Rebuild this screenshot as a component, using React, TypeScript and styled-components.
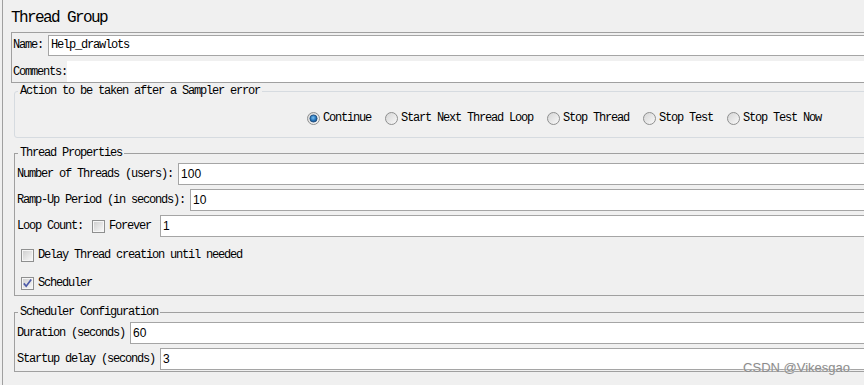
import React, { useId } from 'react';
import styled, { createGlobalStyle } from 'styled-components';

const MONO = `"Liberation Mono", "Courier New", monospace`;
const SANS = `"Liberation Sans", Arial, sans-serif`;

const GlobalStyle = createGlobalStyle`
  html, body {
    margin: 0;
    padding: 0;
    background: #f0f0f0;
  }
  body {
    width: 864px;
    height: 385px;
    overflow: hidden;
  }
`;

const Frame = styled.div`
  position: relative;
  width: 864px;
  height: 385px;
  overflow: hidden;
  box-sizing: border-box;
  padding-left: 2px;
  background: #f0f0f0;
`;

const Panel = styled.div`
  width: 930px;
  height: 100%;
  border-left: 1px solid #a0a0a0;
  display: flex;
  flex-direction: column;
  font-family: ${MONO};
  font-size: 12px;
  letter-spacing: -1.2px;
  color: #000;
`;

const Title = styled.h1`
  margin: 0 0 4px 8px;
  padding-top: 8px;
  font-family: ${MONO};
  font-size: 16px;
  line-height: 20px;
  font-weight: normal;
  letter-spacing: -1.6px;
  color: #000;
`;

const NameBox = styled.div`
  margin-left: 8px;
  border: 1px solid #a0a0a0;
  padding: 1px 0 0 1px;
  display: flex;
  flex-direction: column;
  gap: 5px;
`;

const Row = styled.div<{ $gap?: number; $h?: number }>`
  display: flex;
  align-items: center;
  gap: ${p => p.$gap ?? 5}px;
  height: ${p => p.$h ?? 22}px;
  white-space: nowrap;
`;

const Label = styled.span`
  line-height: 14px;
`;

const TextField = styled.input<{ $mono?: boolean }>`
  flex: 1;
  min-width: 0;
  height: ${p => (p.$mono ? 21 : 22)}px;
  box-sizing: border-box;
  margin: 0;
  padding: 0 2px;
  border: 1px solid #a5a5a5;
  border-radius: 0;
  background: #fff;
  outline: none;
  color: #000;
  font-family: ${p => (p.$mono ? MONO : SANS)};
  font-size: 12px;
  letter-spacing: ${p => (p.$mono ? '-1.2px' : '0')};
`;

const CommentsArea = styled.div`
  flex: 1;
  height: 21px;
  background: #fff;
`;

const Group = styled.fieldset<{ $light?: boolean; $top: number; $bottom?: number }>`
  margin: ${p => p.$top}px 0 0 11px;
  padding: 3px 0 ${p => p.$bottom ?? 0}px 2px;
  min-width: 0;
  border: 1px solid ${p => (p.$light ? '#d6dbe0' : '#a0a0a0')};
  border-radius: ${p => (p.$light ? 3 : 0)}px;
`;

const Legend = styled.legend`
  margin-left: 1px;
  padding: 0 2px;
  font-family: ${MONO};
  font-size: 12px;
  line-height: 14px;
  letter-spacing: -1.2px;
`;

const Stack = styled.div`
  display: flex;
  flex-direction: column;
  gap: 4px;
`;

const CheckList = styled.div`
  display: flex;
  flex-direction: column;
  gap: 4px;
  padding-top: 6px;
`;

const CheckRow = styled.label`
  display: flex;
  align-items: center;
  gap: 4px;
  height: 24px;
  padding-left: 4px;
  white-space: nowrap;
`;

const InlineCheck = styled.label`
  display: flex;
  align-items: center;
  gap: 4px;
  margin: 0 9px;
`;

const RadioRow = styled.div`
  display: flex;
  align-items: center;
  gap: 14px;
  height: 22px;
  margin-top: 6px;
  padding-left: 290px;
  white-space: nowrap;
`;

const RadioItem = styled.label`
  display: flex;
  align-items: center;
  gap: 3px;
`;

const Watermark = styled.div`
  position: absolute;
  right: 14px;
  top: 360px;
  font-family: ${SANS};
  font-size: 13px;
  line-height: 15px;
  color: #8c8c8c;
  text-shadow: 0 0 2px #f0f0f0;
  pointer-events: none;
`;

const Radio: React.FC<{ checked?: boolean }> = ({ checked }) => {
  const id = useId().replace(/:/g, '');
  return (
    <svg width="13" height="13" viewBox="0 0 13 13">
      <defs>
        <linearGradient id={`rf${id}`} x1="0" y1="0" x2="1" y2="1">
          <stop offset="0" stopColor="#d4d4d4" />
          <stop offset="1" stopColor="#fafafa" />
        </linearGradient>
        <radialGradient id={`rd${id}`} cx="0.45" cy="0.4" r="0.6">
          <stop offset="0" stopColor="#7cc0f0" />
          <stop offset="0.6" stopColor="#2a78bd" />
          <stop offset="1" stopColor="#16508a" />
        </radialGradient>
      </defs>
      <circle cx="6.5" cy="6.5" r="6" fill={`url(#rf${id})`} stroke="#8e8f8f" />
      {checked && (
        <circle cx="6.5" cy="6.5" r="3.6" fill={`url(#rd${id})`} stroke="#1a4778" strokeWidth="0.8" />
      )}
    </svg>
  );
};

const Check: React.FC<{ checked?: boolean }> = ({ checked }) => {
  const id = useId().replace(/:/g, '');
  return (
    <svg width="13" height="13" viewBox="0 0 13 13">
      <defs>
        <linearGradient id={`cf${id}`} x1="0" y1="0" x2="1" y2="1">
          <stop offset="0" stopColor="#d0d0d0" />
          <stop offset="1" stopColor="#f7f7f7" />
        </linearGradient>
      </defs>
      <rect x="0.5" y="0.5" width="12" height="12" fill="#f6f6f6" stroke="#8e8f8f" />
      <rect x="2" y="2" width="9" height="9" fill={`url(#cf${id})`} />
      {checked && (
        <path d="M2.8 6.4 L5.2 9.2 L10.2 2.6" fill="none" stroke="#4c5aa8" strokeWidth="1.7" />
      )}
    </svg>
  );
};

const actions = [
  { label: 'Continue', checked: true },
  { label: 'Start Next Thread Loop' },
  { label: 'Stop Thread' },
  { label: 'Stop Test' },
  { label: 'Stop Test Now' },
];

const App: React.FC = () => {
  return (
    <Frame>
      <GlobalStyle />
      <Panel>
        <Title>Thread Group</Title>

        <NameBox>
          <Row>
            <Label>Name:</Label>
            <TextField $mono readOnly value="Help_drawlots" />
          </Row>
          <Row $gap={0} $h={21}>
            <Label>Comments:</Label>
            <CommentsArea />
          </Row>
        </NameBox>

        <Group $light $top={1} $bottom={8}>
          <Legend>Action to be taken after a Sampler error</Legend>
          <RadioRow>
            {actions.map(a => (
              <RadioItem key={a.label}>
                <Radio checked={a.checked} />
                <span>{a.label}</span>
              </RadioItem>
            ))}
          </RadioRow>
        </Group>

        <Group $top={8}>
          <Legend>Thread Properties</Legend>
          <Stack>
            <Row>
              <Label>Number of Threads (users):</Label>
              <TextField readOnly value="100" />
            </Row>
            <Row>
              <Label>Ramp-Up Period (in seconds):</Label>
              <TextField readOnly value="10" />
            </Row>
            <Row $gap={0}>
              <Label>Loop Count:</Label>
              <InlineCheck>
                <Check />
                <span>Forever</span>
              </InlineCheck>
              <TextField readOnly value="1" />
            </Row>
          </Stack>
          <CheckList>
            <CheckRow>
              <Check />
              <span>Delay Thread creation until needed</span>
            </CheckRow>
            <CheckRow>
              <Check checked />
              <span>Scheduler</span>
            </CheckRow>
          </CheckList>
        </Group>

        <Group $top={9} $bottom={1}>
          <Legend>Scheduler Configuration</Legend>
          <Stack>
            <Row>
              <Label>Duration (seconds)</Label>
              <TextField readOnly value="60" />
            </Row>
            <Row>
              <Label>Startup delay (seconds)</Label>
              <TextField readOnly value="3" />
            </Row>
          </Stack>
        </Group>
      </Panel>
      <Watermark>CSDN @Vikesgao</Watermark>
    </Frame>
  );
};

export default App;
